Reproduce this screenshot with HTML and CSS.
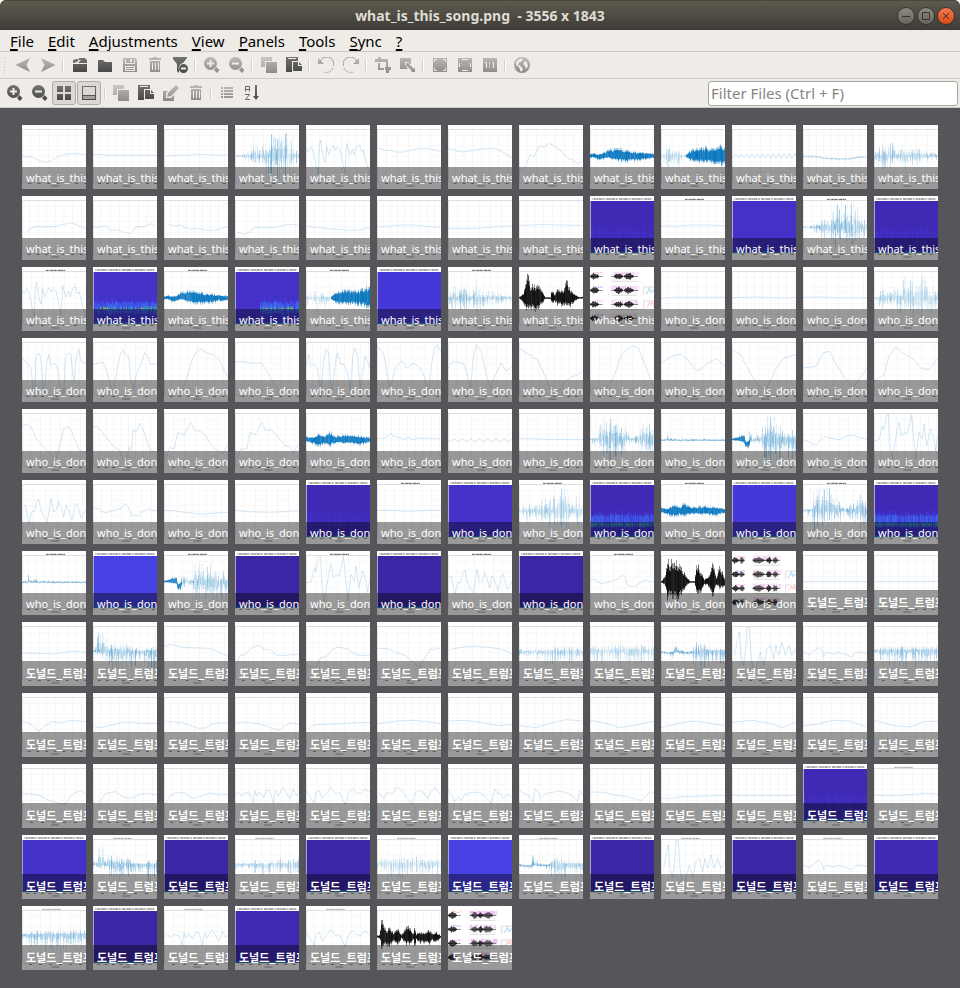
FILE: index.html
```html
<!DOCTYPE html>
<html lang="en">
<head>
<meta charset="utf-8">
<title>what_is_this_song.png - 3556 x 1843</title>
<link rel="stylesheet" href="styles.css">
</head>
<body>
<svg class="defs" aria-hidden="true">
  <defs>
    <linearGradient id="dark" gradientUnits="userSpaceOnUse" x1="0" y1="0" x2="0" y2="16"><stop offset="0" stop-color="#747472"/><stop offset="1" stop-color="#454545"/></linearGradient>
    <linearGradient id="dim" gradientUnits="userSpaceOnUse" x1="0" y1="0" x2="0" y2="16"><stop offset="0" stop-color="#bdbbb8"/><stop offset="1" stop-color="#8c8b88"/></linearGradient>
    <symbol id="back" viewBox="0 0 16 16"><path d="M15 1 0.500 8 15 15l-3.500-7z"/></symbol>
    <symbol id="next" viewBox="0 0 16 16"><path d="M1 1 15.500 8 1 15l3.500-7z"/></symbol>
    <symbol id="opentab" viewBox="0 0 16 16"><path d="M1 7h14v8H1zM1 3l4-1h2L5 5 1 6zM7 1h6l2 2v3H6l3-3H7z"/></symbol>
    <symbol id="folder" viewBox="0 0 16 16"><path d="M1 3h5l2 2h7v10H1z"/></symbol>
    <symbol id="save" viewBox="0 0 16 16"><path fill-rule="evenodd" d="M1 1h12l2 2v12H1zM3 2v5h10V3l-1-1v4H4V2zm5 0v3h2V2zM3 9v5h10V9zm1 1h8v1H4zm0 2h8v1H4z"/></symbol>
    <symbol id="trash" viewBox="0 0 16 16"><path fill-rule="evenodd" d="M6 0h4v1h4v2H2V1h4zM3 4h10v11H3zm2 2v7h1V6zm3 0v7h1V6zm3 0v7h1V6z"/></symbol>
    <symbol id="filter" viewBox="0 0 16 16"><path fill-rule="evenodd" d="M1 0h14v1l-4 5a5 5 0 0 0-4 7v3l-2-2V7L1 2zM11.500 7a4.500 4.500 0 1 1 0 9 4.500 4.500 0 0 1 0-9zM9 10.500v2h5v-2z"/></symbol>
    <symbol id="zoomin" viewBox="0 0 16 16"><path fill-rule="evenodd" d="M6.500 0a6.500 6.500 0 1 1 0 13 6.500 6.500 0 0 1 0-13zM5.500 3v2.500H3v2h2.500V10h2V7.500H10v-2H7.500V3zM12.500 10l3 3-2.500 3-3-3z"/></symbol>
    <symbol id="zoomout" viewBox="0 0 16 16"><path fill-rule="evenodd" d="M6.500 0a6.500 6.500 0 1 1 0 13 6.500 6.500 0 0 1 0-13zM3 5.500v2h7v-2zM12.500 10l3 3-2.500 3-3-3z"/></symbol>
    <symbol id="copy" viewBox="0 0 16 16"><path opacity=".75" d="M0 0h11v4H4v6H0z"/><path d="M5 5h11v11H5z"/></symbol>
    <symbol id="paste" viewBox="0 0 16 16"><path fill-rule="evenodd" d="M0 0h12v4H6v11H0zM2 1v1h8V1z"/><path d="M7 5h5v4h4v5H7zM13 5l3 3h-3z"/></symbol>
    <symbol id="rotleft" viewBox="0 0 16 16"><path d="M0 1l6 6H0z"/><path class="ring" d="M2 5a7 7 0 0 1 13.500 4"/><path class="ring dots" d="M15 11a7 7 0 0 1-9 4"/></symbol>
    <symbol id="rotright" viewBox="0 0 16 16"><path d="M16 1l-6 6h6z"/><path class="ring" d="M14 5A7 7 0 0 0 .500 9"/><path class="ring dots" d="M1 11a7 7 0 0 0 9 4"/></symbol>
    <symbol id="crop" viewBox="0 0 16 16"><path d="M3 0h3v2h7v8h3v3h-2v3h-3v-3h-1v-3h1V5H0V2h3zM3 6h2v5h4v2H3z"/></symbol>
    <symbol id="resize" viewBox="0 0 16 16"><path d="M0 1h11v6L8 5H5v3l3 4H0z"/><path d="M6 6h4L9 7l5 5 1-1v4h-4l1-1-5-5-1 1z"/></symbol>
    <symbol id="fit" viewBox="0 0 16 16"><path d="M1 1h14v14H1z"/><path class="cut" d="M2.500 5V2.500H5M11 2.500h2.500V5M13.500 11v2.500H11M5 13.500H2.500V11"/></symbol>
    <symbol id="full" viewBox="0 0 16 16"><path d="M1 1h14v14H1z"/><path class="cut" d="M5 2.500h6M5 13.500h6M2.500 6v4M13.500 6v4"/></symbol>
    <symbol id="actual" viewBox="0 0 16 16"><path d="M1 1h14v14H1z"/><path class="cut" d="M3 5.500h1.500V11M10 5.500h1.500V11M7.500 6v1.500M7.500 9v1.500"/></symbol>
    <symbol id="globe" viewBox="0 0 16 16"><path fill-rule="evenodd" d="M8 0a8 8 0 1 1 0 16A8 8 0 0 1 8 0zM8 1.500 5 2 2 5v3l2 1 2 3v2l2 .500 1-3-3-3-2-1 1-2 3-1V3l2-1zM11 4l-2 3 2 2 1 3 2-3-1-4z"/></symbol>
    <symbol id="grid" viewBox="0 0 16 16"><path d="M1 1h6v6H1zM9 1h6v6H9zM1 9h6v6H1zM9 9h6v6H9z"/></symbol>
    <symbol id="panel" viewBox="0 0 16 16"><path fill-rule="evenodd" d="M1 1h14v14H1zM2 2v8h12V2z"/><path class="pale" d="M2 11h12v3H2z"/></symbol>
    <symbol id="pencil" viewBox="0 0 16 16"><path d="M13 0l3 3-8 8-4 1 1-4zM0 6h5L3 8v5h5l3-3v6H0z"/></symbol>
    <symbol id="list" viewBox="0 0 16 16"><path d="M2 2h2v2H2zM5 2h9v2H5zM2 5h2v2H2zM5 5h9v2H5zM2 8h2v2H2zM5 8h9v2H5zM2 11h2v2H2zM5 11h9v2H5z"/></symbol>
    <symbol id="sort" viewBox="0 0 16 16"><path class="line" d="M1.500 6.500V1.500h4v5M1.500 4.500h4M1 9.500h4.500l-4 5h4.500"/><path d="M11 0h2v11h2l-3 4-3-4h2z"/></symbol>
  </defs>
</svg>

<div class="window">
  <header class="titlebar">
    <h1>what_is_this_song.png&nbsp; - 3556 x 1843</h1>
    <div class="controls">
      <button type="button" aria-label="Minimize"><svg viewBox="0 0 16 16"><path d="M4 8.500h8"/></svg></button>
      <button type="button" aria-label="Maximize"><svg viewBox="0 0 16 16"><path d="M4.500 4.500h7v7h-7z"/></svg></button>
      <button type="button" class="close" aria-label="Close"><svg viewBox="0 0 16 16"><path d="M5 5l6 6M11 5l-6 6"/></svg></button>
    </div>
  </header>

  <nav class="menu">
    <a href="#"><u>F</u>ile</a>
    <a href="#"><u>E</u>dit</a>
    <a href="#"><u>A</u>djustments</a>
    <a href="#"><u>V</u>iew</a>
    <a href="#"><u>P</u>anels</a>
    <a href="#"><u>T</u>ools</a>
    <a href="#"><u>S</u>ync</a>
    <a href="#"><u>?</u></a>
  </nav>

  <div class="toolbar main" role="toolbar" aria-label="Main">
    <i class="handle"></i>
    <button type="button" class="dim" aria-label="Previous"><svg><use href="#back"/></svg></button>
    <button type="button" class="dim" aria-label="Next"><svg><use href="#next"/></svg></button>
    <i class="sep"></i>
    <button type="button" aria-label="Open"><svg><use href="#opentab"/></svg></button>
    <button type="button" aria-label="Open directory"><svg><use href="#folder"/></svg></button>
    <button type="button" class="dim" aria-label="Save"><svg><use href="#save"/></svg></button>
    <button type="button" class="dim" aria-label="Delete"><svg><use href="#trash"/></svg></button>
    <button type="button" aria-label="Filter"><svg><use href="#filter"/></svg></button>
    <i class="sep"></i>
    <button type="button" class="dim" aria-label="Zoom in"><svg><use href="#zoomin"/></svg></button>
    <button type="button" class="dim" aria-label="Zoom out"><svg><use href="#zoomout"/></svg></button>
    <i class="sep"></i>
    <button type="button" class="dim" aria-label="Copy"><svg><use href="#copy"/></svg></button>
    <button type="button" aria-label="Paste"><svg><use href="#paste"/></svg></button>
    <i class="sep"></i>
    <button type="button" class="dim" aria-label="Rotate left"><svg><use href="#rotleft"/></svg></button>
    <button type="button" class="dim" aria-label="Rotate right"><svg><use href="#rotright"/></svg></button>
    <i class="sep"></i>
    <button type="button" class="dim" aria-label="Crop"><svg><use href="#crop"/></svg></button>
    <button type="button" class="dim" aria-label="Resize"><svg><use href="#resize"/></svg></button>
    <i class="sep"></i>
    <button type="button" class="dim" aria-label="Fit to window"><svg><use href="#fit"/></svg></button>
    <button type="button" class="dim" aria-label="Full screen"><svg><use href="#full"/></svg></button>
    <button type="button" class="dim" aria-label="Actual size"><svg><use href="#actual"/></svg></button>
    <i class="sep"></i>
    <button type="button" class="dim" aria-label="GPS position"><svg><use href="#globe"/></svg></button>
  </div>

  <div class="toolbar thumbs-bar" role="toolbar" aria-label="Thumbnails">
    <button type="button" aria-label="Enlarge thumbnails"><svg><use href="#zoomin"/></svg></button>
    <button type="button" aria-label="Shrink thumbnails"><svg><use href="#zoomout"/></svg></button>
    <button type="button" class="on" aria-pressed="true" aria-label="Squared thumbnails"><svg><use href="#grid"/></svg></button>
    <button type="button" class="on" aria-pressed="true" aria-label="Show labels"><svg><use href="#panel"/></svg></button>
    <i class="sep"></i>
    <button type="button" class="dim" aria-label="Copy files"><svg><use href="#copy"/></svg></button>
    <button type="button" aria-label="Paste files"><svg><use href="#paste"/></svg></button>
    <button type="button" class="dim" aria-label="Rename"><svg><use href="#pencil"/></svg></button>
    <button type="button" class="dim" aria-label="Delete files"><svg><use href="#trash"/></svg></button>
    <i class="sep"></i>
    <button type="button" class="dim" aria-label="Batch"><svg><use href="#list"/></svg></button>
    <button type="button" aria-label="Sort"><svg><use href="#sort"/></svg></button>
    <input type="text" class="search" aria-label="Filter files" placeholder="Filter Files (Ctrl + F)">
  </div>

  <main class="gallery">
    <ul class="thumbs" id="thumbs"></ul>
  </main>
</div>
<script src="thumbs.js"></script>
</body>
</html>
```
FILE: styles.css
```css
* { box-sizing: border-box; }

body {
  margin: 0;
  background: #fff;
  font-family: "Noto Sans", "Noto Sans CJK KR", sans-serif;
  font-size: 15px;
  color: #000;
}

button, input { font: inherit; margin: 0; }

.defs { position: absolute; width: 0; height: 0; }

.window {
  display: flex;
  flex-direction: column;
  min-height: 100vh;
  border-radius: 6px 6px 0 0;
  overflow: hidden;
  background: #565559;
}

.titlebar {
  display: grid;
  grid-template-columns: 1fr auto 1fr;
  align-items: center;
  height: 30px;
  padding: 0 5px;
  background: linear-gradient(#5d5a4e, #3d3c37);
  border-top: 1px solid #4b493f;
}

.titlebar h1 {
  grid-column: 2;
  margin: 0;
  font-size: 14px;
  line-height: 20px;
  font-weight: 700;
  color: #dfdbd2;
}

.controls { display: flex; justify-content: flex-end; gap: 2px; }

.controls button {
  width: 18px;
  height: 18px;
  padding: 0;
  border: 1px solid #35342f;
  border-radius: 50%;
  background: linear-gradient(#8c8a82, #66645d);
}

.controls .close { background: linear-gradient(#f4784f, #df4a16); }

.controls svg {
  display: block;
  width: 16px;
  height: 16px;
  fill: none;
  stroke: #35342f;
  stroke-width: 1;
}

.menu {
  display: flex;
  gap: 14px;
  height: 22px;
  padding: 0 10px;
  background: #efebe7;
  border-bottom: 1px solid #cfccc8;
}

.menu a {
  color: #000;
  text-decoration: none;
  line-height: 22px;
}

.menu u {
  text-decoration: underline;
  text-decoration-thickness: 2px;
  text-underline-offset: 2px;
  text-decoration-skip-ink: none;
}

.toolbar {
  display: flex;
  align-items: center;
  background: #efebe7;
  border-bottom: 1px solid #cbcbcb;
}

.main { height: 27px; }

.thumbs-bar { height: 29px; padding: 0 2px; }

.toolbar button {
  display: grid;
  place-items: center;
  width: 25px;
  height: 24px;
  padding: 0;
  border: 0;
  background: none;
  fill: url(#dark);
}

.toolbar .dim { fill: url(#dim); }

.toolbar .on {
  width: 24px;
  margin-right: 1px;
  border: 1px solid #afaba7;
  border-radius: 3px;
  background: #dcd8d4;
}

.toolbar svg { display: block; width: 16px; height: 16px; }

.ring { fill: none; stroke: #a09e9b; stroke-width: 1; }
.dots { stroke-dasharray: 2 1; }
.cut { fill: none; stroke: #efebe7; stroke-width: 1; }
.pale { fill: #a5a3a0; }
.line { fill: none; stroke: #666; stroke-width: 1; }

.handle {
  width: 4px;
  height: 17px;
  margin: 0 3px;
  background: radial-gradient(circle, #c2beba 1px, transparent 1px) 0 0 / 3px 3px;
}

.sep { width: 2px; height: 12px; margin: 0 3px 0 2px; background: #fff; border-left: 1px solid #d3cfcb; }

.thumbs-bar .sep { margin: 0 2px; }

.search {
  width: 250px;
  height: 25px;
  margin-left: auto;
  padding: 0 2px;
  border: 1px solid #a8a49f;
  border-radius: 3px;
  background: #fff;
}

.search::placeholder { color: #858585; opacity: 1; }

.gallery { flex: 1; padding: 17px 22px; }

.thumbs {
  display: grid;
  grid-template-columns: repeat(auto-fill, 64px);
  gap: 7px;
  margin: 0;
  padding: 0;
  list-style: none;
}

.thumb {
  position: relative;
  height: 64px;
  overflow: hidden;
  background: #fff;
}

.thumb svg { display: block; width: 64px; height: 64px; }

.thumb span {
  position: absolute;
  inset: auto 0 0 0;
  height: 22px;
  padding-left: 4px;
  background: rgba(0, 0, 0, .4);
  color: #fff;
  font-size: 11px;
  line-height: 22px;
  white-space: nowrap;
  overflow: hidden;
}

.thumb .ko {
  height: 25px;
  line-height: 24px;
  font-family: "Noto Sans CJK KR", sans-serif;
  font-weight: 700;
}
```
FILE: thumbs.js
```js
// Each plot is drawn in a 192 x 192 box. L: line, N: blue waveform, K: black waveform,
// S: spectrogram, W: small oscillation, C: overview of several plots.
let seed = 7;
const rnd = () => (seed = (seed * 16807) % 2147483647) / 2147483647;

const L = (p, t) => ({ k: 'L', p, t });
const N = (mid, o, core, env, t) => ({ k: 'N', mid, o, core, env, t });
const K = env => ({ k: 'K', mid: 92, o: 0.55, core: 0.9, env });
const S = (c, tex = 0, x0 = 0) => ({ k: 'S', c, tex, x0 });
const titled = d => ({ ...d, t: 1 });

const burst = N(93, .3, 0, '0 91 95 20 88 98 30 80 110 45 82 112 60 55 140 72 75 115 85 50 140 100 14 160 115 25 160 130 14 170 150 15 165 165 35 155 175 70 125 192 65 140');
const peaks = L('0,70 5,80 15,65 22,80 30,120 37,150 40,60 44,45 50,90 57,112 62,65 68,90 76,70 82,62 88,75 95,65 103,75 110,110 117,145 122,55 127,75 132,90 140,72 145,90 152,65 160,60 167,80 172,75 180,110 192,150');
const ribbon = N(92, .3, .95, '0 86 100 10 82 98 20 88 108 35 84 108 50 72 100 70 66 108 100 68 116 120 76 114 150 80 110 192 84 100');
const swell = { k: 'N', mid: 92, o: .2, core: 0, env: '0 80 110 15 58 135 30 75 140 55 78 130 70 88 100 75 90 96', more: [92, .5, .95, '75 86 98 85 76 108 100 68 114 130 62 116 160 66 118 180 56 124 192 60 124'] };
const strings = N(93, .24, .06, '0 80 120 15 55 130 30 60 140 50 28 140 60 75 115 70 80 110 85 35 150 95 70 130 120 65 120 150 78 112 192 80 105');
const soft = N(93, .22, 0, '0 90 96 12 72 115 22 62 130 40 72 110 60 60 130 75 50 140 90 20 150 110 40 150 130 16 165 150 30 150 170 45 140 192 60 125');
const thick = N(92, .3, .95, '0 80 100 20 84 108 40 68 116 55 80 108 68 64 116 90 78 104 130 74 106 165 80 112 192 84 100');
const comb = N(90, .3, .08, '0 88 98 10 85 115 24 80 100 30 17 160 60 17 160 80 25 160 105 45 145 118 78 108 135 80 108 150 50 140 165 30 155 192 50 150');
const spike = { k: 'N', mid: 93, o: .3, core: .4, env: '0 90 95 15 88 95 18 64 95 22 86 95 35 86 96 39 78 96 46 88 96 70 88 96 192 90 96' };
const tail = { k: 'N', mid: 92, o: .3, core: .05, env: '50 65 115 70 78 105 85 80 105 92 17 160 130 17 165 150 60 155 192 55 150', more: [90, .5, .8, '0 89 95 15 84 97 30 75 100 36 78 105 40 100 120 48 95 118 52 90 105'] };
const jag = L('0,95 15,92 25,50 30,62 38,17 44,17 48,110 55,150 70,60 75,40 82,80 90,70 100,75 112,17 117,60 125,150 135,70 145,90 150,45 158,110 170,60 180,90 185,125 192,80');
const bumps = L('0,85 10,75 20,130 30,95 37,95 45,65 50,57 57,90 68,115 75,125 82,90 87,55 95,95 103,90 110,65 118,85 125,110 132,75 140,90 150,120 160,75 165,70 178,115 192,90');
const knoll = L('0,85 15,85 25,95 40,98 60,92 75,87 85,85 97,70 105,80 115,105 135,107 150,95 165,87 180,92 192,92');
const koBurst = N(88, .3, .12, '0 78 98 8 70 98 14 30 100 22 17 120 30 25 110 38 55 120 60 60 145 90 60 145 120 74 140 145 80 110 165 76 150 192 68 150');
const koLow = N(88, .22, .05, '0 78 106 15 82 104 40 84 106 60 75 118 80 80 130 110 74 125 140 70 130 192 70 130');
const koRow = N(86, .2, 0, '0 70 110 30 70 130 80 66 130 130 66 130 192 70 125');
const koTwo = { k: 'N', mid: 88, o: .3, core: .1, env: '90 75 120 105 60 150 130 65 140 150 76 120 192 75 130', more: [90, .3, .4, '0 86 96 20 90 104 34 88 108 40 55 95 46 62 95 60 82 98 75 88 104 90 85 105'] };
const koTall = L('8,100 15,60 22,30 27,100 35,130 42,70 45,17 52,17 57,100 65,150 75,130 85,90 95,130 105,80 115,70 125,110 132,70 140,100 150,60 160,100 170,70 180,100 192,80');
const koSmall = L('0,90 20,98 35,85 47,77 57,85 62,105 70,90 90,97 105,90 130,98 145,105 160,90 192,93');
const koComb = { k: 'N', mid: 86, o: .25, core: .15, env: '0 82 100 20 76 120 60 72 140 120 72 140 192 70 135' };
const koWave = L('0,93 10,85 20,95 30,85 45,90 55,117 60,80 65,95 75,83 85,100 95,78 105,80 115,118 122,80 130,95 145,70 155,90 165,105 175,75 185,95 192,85');
const koWave2 = L('0,78 10,95 25,118 30,85 40,80 48,105 60,90 75,70 90,90 100,85 110,105 118,122 128,85 140,75 150,85 165,90 175,75 192,85');
const purple = '#402ab5', violet = '#4431c8', indigo = '#4638d8', bright = '#4741e4', deep = '#3c26a6';

const plots = [
  L('0,94 25,95 40,100 55,108 72,112 90,106 110,95 130,88 155,85 170,87 192,89'),
  L('0,88 25,89 45,91 192,91'), L('5,92 50,91 80,90 110,88 140,90 190,91'), burst, peaks,
  L('0,70 12,71 25,76 40,75 55,81 80,81 100,76 130,70 150,70 170,74 192,80'),
  L('0,73 10,71 25,78 45,81 70,77 100,72 130,70 150,73 165,82 180,92 192,98'),
  L('0,135 15,132 25,110 33,88 45,95 60,63 75,66 90,55 100,60 120,72 135,88 150,102 160,103 175,117 190,108'),
  ribbon, swell, { k: 'W', mid: 93, amp: 9, per: 16 },
  N(95, .18, .2, '0 84 96 30 88 98 60 96 104 100 98 108 130 99 107 160 94 102 192 90 96'), strings,

  L('15,106 30,95 45,91 75,93 100,91 120,86 145,81 160,85 180,93 192,97'),
  L('0,92 15,94 28,90 42,92 55,103 80,102 95,109 110,113 120,105 130,92 150,92 165,88 175,83 185,88'),
  L('15,85 30,90 50,87 65,95 80,100 100,97 130,103 155,103 175,96 192,92'),
  L('5,109 30,115 45,107 60,95 90,94 120,94 150,87 175,85 192,88'),
  L('0,91 35,94 60,98 100,100 130,104 160,102 192,94'), L('0,93 40,90 75,87 110,87 150,91 192,94'),
  L('0,97 90,97 110,95 150,91 192,90'), L('0,88 50,87 75,85 110,87 192,88'),
  S(purple, 1), L('0,92 20,89 30,91 70,89 85,87 150,87 192,90', 1), S(violet), titled(burst), S(purple, 1),

  titled(peaks), S(violet, 3), titled(ribbon), S(violet, 3, 75), titled(swell), S(indigo), titled(strings),
  K('0 88 95 12 78 110 25 15 140 33 45 130 45 45 140 60 50 130 70 72 110 78 91 94 93 91 95 97 68 115 105 80 106 115 64 118 135 60 122 142 30 120 150 60 125 165 80 106 180 90 95 192 88 95'),
  { k: 'C', shape: [[0, 26], [72, 26], [102, 28]] },
  L('0,93 40,91 110,91 192,91'), L('0,92 75,90 150,93 192,91'), L('0,91 60,90 120,93 192,92'), soft,

  L('0,60 15,75 27,90 33,150 38,165 42,60 50,45 56,55 62,140 68,165 73,80 80,50 87,85 97,75 107,90 115,150 125,168 130,60 138,45 147,50 152,110 157,130 162,60 170,35 178,70 192,75'),
  L('0,80 15,75 30,72 40,95 50,135 60,165 75,80 83,45 90,37 98,50 107,55 113,125 123,152 130,110 145,75 155,45 165,55 172,80 185,78 192,80'),
  L('55,160 68,120 85,65 95,45 110,33 130,45 150,50 165,65 180,95 192,120'),
  L('0,71 30,71 40,75 70,75 80,75 92,95 110,125 130,155 150,170'),
  L('0,85 8,50 15,85 25,78 35,95 45,165 52,80 60,35 68,45 75,150 80,155 90,60 95,45 103,78 115,80 125,105 133,160 140,60 147,30 155,55 162,150 170,100 177,55 185,70 192,90'),
  L('0,25 15,40 23,60 30,110 38,145 45,130 55,90 75,68 90,90 110,75 130,90 140,110 155,165 165,70 173,30 180,20 192,42'),
  L('0,92 15,70 25,72 45,75 55,100 68,150 77,50 85,20 100,40 115,110 127,150 140,115 160,75 175,100 192,85'),
  L('0,30 30,50 55,65 70,95 90,145 115,165 140,130 160,115 175,112 192,98'),
  L('0,150 45,155 70,120 95,50 125,22 145,30 165,80 192,150'),
  L('0,75 30,55 60,48 80,65 110,100 140,75 165,62 192,85'),
  L('0,35 25,50 50,95 75,140 100,160 130,95 155,60 192,50'),
  L('0,90 40,85 60,45 80,40 95,70 125,120 150,150 192,90'),
  L('0,130 30,110 45,55 65,28 85,45 115,60 140,90 165,95 192,60'),

  L('0,50 15,45 28,55 40,85 60,110 90,140 100,160 110,120 125,60 140,52 150,70 160,95 172,125 192,130'),
  L('0,55 12,50 22,62 40,85 60,110 80,125 98,165 108,115 115,125 120,62 130,70 140,43 150,60 160,90 172,125 192,130'),
  L('5,150 17,115 30,120 42,70 60,78 80,40 92,65 110,67 125,80 140,105 155,120 175,135 190,110'),
  L('5,150 17,120 35,120 45,70 60,78 80,40 92,65 110,62 130,85 150,110 165,112 175,130 192,105'),
  thick, L('0,90 20,88 35,80 42,72 50,82 70,86 80,92 95,85 105,92 125,88 150,88 175,90 192,88'),
  { k: 'W', mid: 94, amp: 6, per: 25 }, L('0,89 60,90 90,92 192,91'), comb, spike, tail,
  L('0,92 20,100 40,110 50,95 65,83 85,88 110,92 130,82 150,78 175,88 192,90'), jag,

  bumps, knoll, L('0,91 30,92 60,97 90,100 115,103 140,100 170,98 192,97'), L('0,91 40,95 100,97 150,95 192,92'),
  S(purple, 1), L('0,91 50,91 80,93 120,93 140,91 192,91', 1), S(violet), titled(soft), S(purple, 2),
  titled(thick), S(indigo), titled(comb), S(purple, 2),

  titled(spike), S(bright), titled(tail), S(deep), titled(jag), S(deep), titled(bumps), S(deep), titled(knoll),
  K('0 90 94 10 75 105 18 20 150 40 20 155 58 40 150 75 76 108 88 91 94 100 90 95 105 18 125 115 50 140 128 84 100 140 74 108 155 28 150 164 80 104 175 25 115 185 70 114 192 85 100'),
  { k: 'C', shape: [[0, 20], [22, 14], [62, 34], [102, 16], [122, 14]] }, L('0,92 192,92'), L('0,92 150,92 192,91'),

  L('0,93 60,94 90,96 110,93 150,88 192,91'), koBurst,
  L('0,73 18,67 40,72 60,77 110,78 140,80 160,88 180,98 192,101'),
  L('5,130 15,100 30,98 45,82 60,72 75,70 85,82 105,82 125,100 150,100 192,97'),
  L('0,130 30,137 45,105 60,105 80,82 95,75 110,78 125,80 140,92 155,100 192,100'),
  L('0,79 35,80 60,93 85,100 110,122 130,137 137,118 150,98 158,82 172,82 185,78 192,85'),
  L('5,83 40,76 80,73 130,77 160,82 192,95'), koLow, koRow, koTwo, koTall, koSmall, koComb,

  L('0,87 15,87 25,93 40,105 50,115 65,100 80,92 90,85 115,90 125,88 140,83 160,83 192,86'),
  L('5,103 30,103 50,97 70,92 90,88 120,88 140,91 192,91'),
  L('5,85 30,87 60,90 85,100 105,106 125,105 145,92 165,89 192,91'),
  L('5,88 40,88 70,92 95,100 120,109 135,109 150,97 170,89 192,95'),
  L('5,108 25,95 90,93 120,91 150,89 192,89'), L('0,92 60,84 110,82 150,86 192,92'),
  L('0,84 50,82 100,88 150,98 192,94'), L('0,98 50,104 90,92 140,80 192,84'),
  L('0,82 45,90 90,104 130,98 192,84'), L('0,104 50,92 95,84 140,90 192,98'),
  L('0,88 60,82 110,90 150,104 192,88'), L('0,98 40,94 90,82 140,84 192,102'), L('0,82 60,98 110,102 150,86 192,84'),

  L('0,89 25,90 50,93 80,108 110,118 130,120 145,98 155,88 170,82 180,82 192,90'),
  L('15,118 30,100 40,87 70,83 85,95 100,102 120,102 140,91 160,88 192,93'),
  L('5,117 20,95 35,87 60,86 75,97 90,103 115,95 135,87 160,90 192,92'), koWave, koWave2,
  L('5,85 20,105 28,85 45,90 60,70 75,80 90,100 105,122 115,85 125,80 140,85 152,105 160,85 175,70 192,95'),
  L('0,75 10,95 20,112 30,98 40,110 50,92 70,85 95,85 110,95 130,118 140,75 150,90 158,87 165,105 180,90 192,100'),
  L('0,80 15,88 30,95 42,115 48,75 58,85 65,105 80,88 100,85 120,82 140,85 160,95 175,112 183,80 192,95'),
  L('0,84 40,85 70,92 110,98 135,105 155,110 165,100 180,83 192,86'),
  L('0,103 35,103 60,98 130,96 192,94'), L('0,94 192,94'), S(purple, 1), L('0,93 60,95 100,92 140,90 150,87 192,91', 1),

  S(violet), titled(koBurst), S(deep), titled(koLow), S(deep), titled(koRow), S(bright), titled(koTwo), S(deep),
  titled(koTall), S(deep), titled(koSmall), S(purple),

  titled(koComb), S(deep), titled(koWave), S(purple), titled(koWave2),
  K('0 88 96 8 86 98 11 20 140 18 50 130 25 66 124 38 60 130 48 78 108 62 66 124 72 86 100 85 60 120 93 50 120 105 76 108 110 84 100 112 15 165 115 86 100 125 74 116 140 78 112 155 70 120 165 82 104 175 74 112 192 90 95'),
  { k: 'C', shape: [[0, 26], [70, 20], [90, 14], [104, 30]], pink: 1 }
];

const rect = (x, y, w, h, fill, o = 1) => `<rect x="${x}" y="${y}" width="${w}" height="${h}" fill="${fill}" opacity="${o.toFixed(2)}"/>`;

// Interpolated waveform envelope at x, or null outside its range.
function envelope(nums, x) {
  for (let i = 0; i + 5 < nums.length; i += 3) {
    const [a, t0, b0, b, t1, b1] = nums.slice(i, i + 6);
    if (x >= a && x <= b) {
      const f = (x - a) / (b - a);
      return [t0 + (t1 - t0) * f, b0 + (b1 - b0) * f];
    }
  }
  return null;
}

// Solid waveforms keep a wide opaque middle; light ones are loose, uneven strokes.
function wave(mid, o, core, env, color) {
  const nums = env.split(' ').map(Number);
  const solid = core > .5;
  let out = '';
  for (let x = 0; x < 192; x += 3) {
    const e = envelope(nums, x);
    if (!e) continue;
    const m = Math.min(e[1] - 2, Math.max(e[0] + 2, mid));
    const r = solid ? .6 + .4 * rnd() : .1 + .9 * rnd();
    const q = solid ? .6 + .4 * rnd() : .1 + .9 * rnd();
    const top = m - (m - e[0]) * r, bot = m + (e[1] - m) * q;
    const v = rnd();
    out += rect(x, Math.round(top), 3, Math.round(bot - top), color, solid ? o * (.6 + .6 * v) : o * (.15 + 1.1 * v * v));
    const n = solid ? .72 : .45;
    const it = m - (m - e[0]) * r * n, ib = m + (e[1] - m) * q * n;
    out += rect(x, Math.round(it), 3, Math.max(4, Math.round(ib - it)), color, solid ? core * (.8 + .2 * rnd()) : o * (.2 + .6 * rnd()) + core * .5);
  }
  return out;
}

function frame(i, titleKind, ko) {
  const step = [28, 24, 37, 30, 22, 33, 26][i % 7];
  let s = '';
  for (const y of [30, 60, 76, 92, 108, 140]) s += rect(0, y, 192, 2, '#f7f7f7');
  for (let x = step - 5; x < 192; x += step) s += rect(x, 15, 2, 156, '#f4f4f4') + rect(x - 4, 174, 9, 3, '#555', .6);
  s += rect(0, 12, 192, 3, '#dedede') + rect(0, 15, 3, 156, '#e4e4e4') + rect(0, 171, 192, 1, '#ccc') + rect(88, 181, 24, 4, '#777', .5);
  if (titleKind) s += ko
    ? '<path d="M61 10h56" stroke="#555" stroke-width="3" stroke-dasharray="6 1 4 2 8 1" opacity=".55"/>'
    : '<path d="M72 10h57" stroke="#111" stroke-width="3" stroke-dasharray="7 1 3 2 9 1" opacity=".7"/>';
  return s;
}

function spectrogram(p) {
  let s = rect(0, 15, 192, 156, p.c) + rect(0, 15, 3, 156, '#aaa3dc') + rect(0, 12, 192, 3, '#fff');
  s += '<path d="M6 9h178" stroke="#111" stroke-width="3" stroke-dasharray="2 3 9 1 4 1 12 2 3 1" opacity=".7"/>';
  if (p.tex) {
    for (let x = Math.max(3, p.x0); x < 192; x += 3) {
      const top = 88 + Math.round(rnd() * 22);
      s += rect(x, top, 3, 168 - top, '#3f42f5', p.tex > 1 ? .2 + rnd() * .3 : rnd() * .28);
      if (p.tex > 1) {
        s += rect(x, 102 + Math.round(rnd() * 9), 3, 34, '#3f7dfc', .2 + rnd() * .5);
        if (rnd() > .3) s += rect(x, p.tex > 2 ? 118 : 128, 3, 12, '#20bfa0', .15 + rnd() * .5);
        if (rnd() > .75) s += rect(x, p.tex > 2 ? 122 : 132, 3, 5, '#d6c72e', p.tex > 2 ? .6 : .3);
      }
    }
  }
  for (let x = 3; x < 192; x += 3) s += rect(x, 165, 3, 3, '#3168ff', rnd() * .35);
  return s + rect(0, 168, 192, 3, '#279ebf', .7) + rect(94, 165, 30, 3, '#20b070', .4);
}

function overview(p) {
  let s = '';
  ['#ff7a7a', '#7a7aff', '#ff6af0', '#b05ab0'].forEach((c, r) => {
    const y = 28 + r * 42;
    for (let x = 10; x < 38; x += 3) s += rect(x, y - 14 + Math.round(rnd() * 5), 3, 3, c, .5);
    s += rect(62, y - 15, 80, 28, '#eee', .5);
    for (let x = 64; x < 146; x += 3) if (rnd() > .5) s += rect(x, y - 13, 3, 14, '#f04df0', p.pink ? .4 : .22);
    s += rect(0, y - 1, 38, 2, '#555') + rect(64, y - 1, 80, 2, '#555');
    p.shape.forEach(([x, w]) => {
      for (let i = 0; i < w; i += 3) {
        const h = 4 + Math.round(Math.sin(Math.PI * (i + 1) / w) * 18 * (.5 + .5 * rnd()));
        s += rect(x + i, y - h / 2, 3, h, '#000', .75);
      }
    });
    s += rect(66, y + 15, 76, 2, '#bbb', .6);
  });
  s += '<path d="M161 84V60h31M161 126V102h31" stroke="#ccc" stroke-width="2" fill="none"/>';
  s += '<path d="M168 80l6-6 4-10 5 12 9-8" stroke="#bde0f4" stroke-width="4" fill="none"/><path d="M168 122l6-6 4-10 5 8 4-12 5 18" stroke="#ffc5c5" stroke-width="3" fill="none"/>';
  return s;
}

function draw(p, i, ko) {
  if (p.k === 'C') return overview(p);
  let s = frame(i, p.t && p.k !== 'S', ko);
  if (p.k === 'S') s += spectrogram(p);
  if (p.k === 'N') {
    s += wave(p.mid, p.o, p.core, p.env, '#0072bd');
    if (p.more) s += wave(...p.more, '#0072bd');
  }
  if (p.k === 'K') s += wave(p.mid, p.o, p.core, p.env, '#000');
  let pts = p.p;
  if (p.k === 'W') {
    pts = '';
    for (let x = 0; x <= 192; x += 3) pts += `${x},${Math.round(p.mid + Math.sin(x / p.per * 6.283) * p.amp * (.5 + x / 380))} `;
  }
  if (pts) s += `<polyline points="${pts}" fill="none" stroke="#0072bd" stroke-width="3" stroke-linejoin="round" opacity=".17"/>`;
  return s;
}

document.getElementById('thumbs').innerHTML = plots.map((p, i) => {
  const ko = i >= 89;
  const name = ko ? '도널드_트럼프' : i < 35 ? 'what_is_this_song' : 'who_is_donald_trump';
  return `<li class="thumb"><svg viewBox="0 0 192 192" aria-hidden="true">${draw(p, i, ko)}</svg><span${ko ? ' class="ko" lang="ko"' : ''}>${name}</span></li>`;
}).join('');
```
